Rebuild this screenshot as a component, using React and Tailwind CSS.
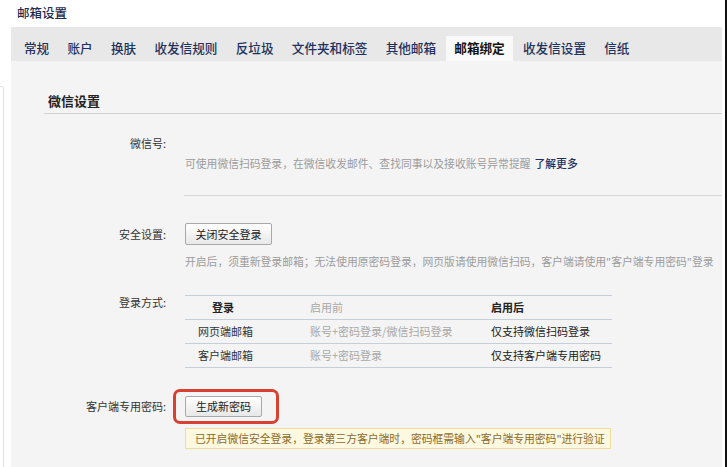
export default function App() {
  const tabs = ['常规', '账户', '换肤', '收发信规则', '反垃圾', '文件夹和标签', '其他邮箱', '邮箱绑定', '收发信设置', '信纸'];
  const active = '邮箱绑定';
  const Label = ({ children, lh }) => (
    <div className={`w-[122px] shrink-0 text-right text-[11px] text-[#333] ${lh}`}>{children}</div>
  );
  return (
    <div className="w-[727px] h-[467px] overflow-hidden bg-white flex font-['Noto_Sans_CJK_SC',sans-serif]">
      <div className="w-[11px] shrink-0 flex flex-col">
        <div className="h-[87px] border-b border-[#e4e4e4] w-[3px]" />
        <div className="flex-1 ml-[3px] border-l border-[#e2e2e2]" />
      </div>
      <div className="flex-1 flex flex-col min-w-0">
        <div className="h-[27px] pl-[6px] flex items-center text-[12.5px] text-[#1c2d52] font-medium leading-none">邮箱设置</div>
        <div className="h-[34px] bg-[#e8e8e8] flex items-end pl-[5px] gap-[2.3px]">
          {tabs.map((t) => (
            <div
              key={t}
              className={
                t === active
                  ? 'h-[25px] px-2 flex items-center leading-none text-[12.6px] bg-[#f9f9f9] text-[#111] font-bold'
                  : 'h-[25px] px-2 flex items-center leading-none text-[12.6px] text-[#1e3260] font-medium'
              }
            >
              {t}
            </div>
          ))}
        </div>
        <div className="flex-1 bg-[#f4f4f4] flex flex-col">
          <div className="mt-[28px] ml-[33px] h-[25px] border-b border-[#d3d3d3] pl-[4px] text-[13px] font-bold leading-[24px] text-[#222]">微信设置</div>
          <div className="ml-[33px] flex flex-col">
            <div className="flex mt-[19px]">
              <Label lh="leading-[20px]">微信号:</Label>
              <div className="flex-1 pl-[19px]">
                <div className="h-[20px]" />
                <div className="leading-[20px] text-[10.8px] text-[#9c9c9c] whitespace-nowrap">
                  可使用微信扫码登录，在微信收发邮件、查找同事以及接收账号异常提醒
                  <span className="text-[#1d2f5c] ml-[4px] font-medium">了解更多</span>
                </div>
                <div className="mt-[22px] -ml-[1px] border-t border-[#d6d6d6]" />
              </div>
            </div>
            <div className="flex mt-[27px]">
              <Label lh="leading-[22px]">安全设置:</Label>
              <div className="flex-1 pl-[19px]">
                <div className="w-[87px] h-[22px] border border-[#a8a8a8] rounded-[2px] bg-linear-to-b from-[#ffffff] to-[#e8e8e8] flex items-center justify-center text-[11px] text-[#222] leading-none">关闭安全登录</div>
                <div className="mt-[6px] leading-[20px] text-[10.8px] text-[#9c9c9c] whitespace-nowrap">开启后，须重新登录邮箱；无法使用原密码登录，网页版请使用微信扫码，客户端请使用"客户端专用密码"登录</div>
              </div>
            </div>
            <div className="flex mt-[24px]">
              <Label lh="leading-[14px]">登录方式:</Label>
              <div className="flex-1 pl-[19px]">
                <div className="w-[427px] border-t border-[#c5cfdc] text-[11px] leading-none">
                  <div className="flex h-[24px] items-center border-b border-[#c5cfdc]">
                    <div className="w-[113px] pl-[27px] font-bold text-[#222]">登录</div>
                    <div className="w-[181px] pl-[12px] text-[#a8a8a8]">启用前</div>
                    <div className="pl-[12px] font-bold text-[#222]">启用后</div>
                  </div>
                  <div className="flex h-[24px] items-center border-b border-[#c5cfdc]">
                    <div className="w-[113px] pl-[13px] text-[#333]">网页端邮箱</div>
                    <div className="w-[181px] pl-[12px] text-[#a8a8a8]">账号+密码登录/微信扫码登录</div>
                    <div className="pl-[12px] text-[#222]">仅支持微信扫码登录</div>
                  </div>
                  <div className="flex h-[24px] items-center border-b border-[#c5cfdc]">
                    <div className="w-[113px] pl-[13px] text-[#333]">客户端邮箱</div>
                    <div className="w-[181px] pl-[12px] text-[#a8a8a8]">账号+密码登录</div>
                    <div className="pl-[12px] text-[#222]">仅支持客户端专用密码</div>
                  </div>
                </div>
              </div>
            </div>
            <div className="flex mt-[28px]">
              <Label lh="leading-[21px]">客户端专用密码:</Label>
              <div className="flex-1 pl-[19px]">
                <div className="relative w-[77px] h-[21px]">
                  <div className="w-full h-full border border-[#a8a8a8] rounded-[2px] bg-linear-to-b from-[#ffffff] to-[#e8e8e8] flex items-center justify-center text-[11px] text-[#222] leading-none">生成新密码</div>
                  <div className="absolute -left-[12px] -top-[7px] w-[106px] h-[35px] border-[3px] border-[#d8412f] rounded-[7px]" />
                </div>
                <div className="mt-[11px] w-[426px] h-[21px] border border-[#efdd9f] bg-[#fdf8e0] pl-[9px] flex items-center text-[10.8px] text-[#8a6b2c] leading-none whitespace-nowrap">已开启微信安全登录，登录第三方客户端时，密码框需输入"客户端专用密码"进行验证</div>
              </div>
            </div>
          </div>
        </div>
      </div>
      <div className="w-[3px] shrink-0 bg-white" />
      <div className="w-[2px] shrink-0 bg-[#111]" />
    </div>
  );
}
